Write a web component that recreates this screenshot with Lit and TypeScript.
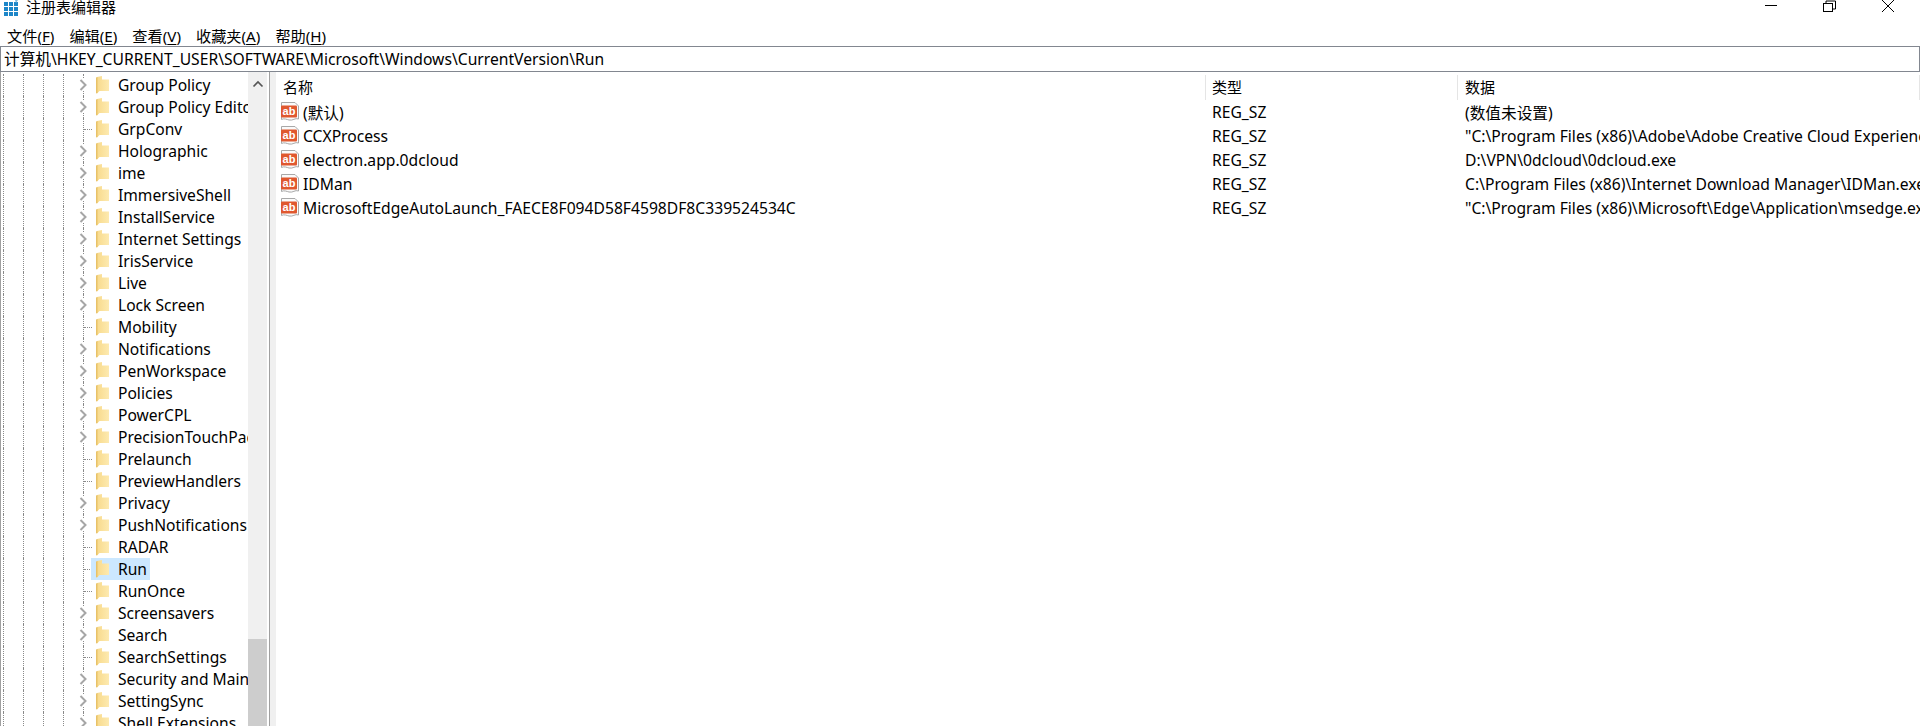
import { LitElement, html, css, svg } from "lit";
import { customElement } from "lit/decorators.js";

const TREE: [string, boolean][] = [
  ["Group Policy", true], ["Group Policy Editor", true], ["GrpConv", false], ["Holographic", true], ["ime", true],
  ["ImmersiveShell", true], ["InstallService", true], ["Internet Settings", true], ["IrisService", true], ["Live", true],
  ["Lock Screen", true], ["Mobility", false], ["Notifications", true], ["PenWorkspace", true], ["Policies", true],
  ["PowerCPL", true], ["PrecisionTouchPad", true], ["Prelaunch", false], ["PreviewHandlers", false], ["Privacy", true],
  ["PushNotifications", true], ["RADAR", false], ["Run", false], ["RunOnce", false], ["Screensavers", true],
  ["Search", true], ["SearchSettings", false], ["Security and Maintenance", true], ["SettingSync", true], ["Shell Extensions", true],
];
const VALUES = [
  ["(默认)", "(数值未设置)"],
  ["CCXProcess", "\"C:\\Program Files (x86)\\Adobe\\Adobe Creative Cloud Experience\\CCXProcess.exe\""],
  ["electron.app.0dcloud", "D:\\VPN\\0dcloud\\0dcloud.exe"],
  ["IDMan", "C:\\Program Files (x86)\\Internet Download Manager\\IDMan.exe /onboot"],
  ["MicrosoftEdgeAutoLaunch_FAECE8F094D58F4598DF8C339524534C", "\"C:\\Program Files (x86)\\Microsoft\\Edge\\Application\\msedge.exe\" --no-startup-window"],
];

const folder = svg`<svg class="folder" width="13" height="18" viewBox="0 0 13 18"><defs><linearGradient id="fg" x1="0" y1="0" x2="1" y2="0"><stop offset="0" stop-color="#f8da8c"/><stop offset="1" stop-color="#fdeab0"/></linearGradient></defs><path d="M1 17.500 L1 1 L6 0 L6 3.500 L13 3.500 L13 15 L3.500 15 L1 17.500Z" fill="url(#fg)"/><path d="M0 1.500 L1.500 1 L1.500 17 L0 17.500Z" fill="#e8c268"/></svg>`;
const chev = svg`<svg class="chev" width="9" height="12" viewBox="0 0 9 12"><path d="M1.500 1 L6.500 6 L1.500 11" fill="none" stroke="#a6a6a6" stroke-width="2"/></svg>`;
const ab = svg`<svg class="ab" width="20" height="20" viewBox="0 0 20 20"><path d="M1.500 .5 H15 L18.500 4 V17 C15 15.500 13 19 9 18 C7 17.500 4 16 1.500 17.500Z" fill="#fafafa" stroke="#a8a8a8"/><rect x="1" y="3.500" width="16" height="12" rx="1" fill="#e0582f"/><text x="9" y="13" font-family="Liberation Sans, sans-serif" font-weight="700" font-size="11" fill="#fff" text-anchor="middle">ab</text></svg>`;
const appIcon = svg`<svg width="18" height="16" viewBox="0 0 18 16"><g fill="#1d86c8"><rect x="2" y="2" width="4" height="4"/><rect x="7" y="2" width="4" height="4"/><rect x="12" y="2" width="4" height="4"/><rect x="2" y="7" width="4" height="4"/><rect x="7" y="7" width="4" height="4"/><rect x="12" y="7" width="4" height="4"/><rect x="2" y="12" width="4" height="4"/><rect x="7" y="12" width="4" height="4"/><rect x="12" y="12" width="4" height="4"/></g><path d="M13 0 L16 0 L14 3Z" fill="#7fb8dc"/></svg>`;

@customElement("app-root")
export class AppRoot extends LitElement {
  static styles = css`
    :host { display: block; width: 1920px; height: 726px; overflow: hidden; background: #fff; font-family: "Noto Sans", "Noto Sans CJK SC", sans-serif; font-size: 15.6px; color: #000; }
    .title { height: 23px; display: flex; align-items: flex-start; }
    .title .icon { margin: -1px 4px 0 2px; height: 16px; }
    .title .t { font-size: 15px; line-height: 14px; margin-left: 2px; }
    .wc { margin-left: auto; display: flex; }
    .wc svg { display: block; }
    .menu { height: 23px; display: flex; align-items: center; padding-left: 7px; gap: 15px; font-size: 15.2px; }
    .menu u { text-underline-offset: 2px; }
    .addr { height: 24px; border: 1px solid #828790; line-height: 24px; padding-left: 3px; white-space: nowrap; overflow: hidden; font-size: 15.66px; }
    .main { display: flex; height: 654px; }
    .treep { width: 266px; display: flex; flex: none; border-left: 1px solid #a0a0a0; overflow: hidden; }
    .tree { width: 247px; overflow: hidden; flex: none; padding-top: 2px; }
    .row { height: 22px; display: flex; align-items: stretch; padding-left: 2px; white-space: nowrap; }
    .g { width: 19px; border-left: 1px dotted #8a8a8a; flex: none; }
    .conn { width: 12px; flex: none; border-left: 1px dotted #8a8a8a; display: flex; align-items: center; }
    .conn .h { width: 8px; border-top: 1px dotted #8a8a8a; }
    .conn .chev { margin-left: -5px; background: #fff; }
    .item { display: flex; align-items: center; padding-left: 5px; padding-right: 3px; margin-left: -5px; line-height: 24px; }
    .item.sel { background: #cce8ff; }
    .folder { margin-right: 9px; flex: none; }
    .sb { width: 19px; flex: none; background: #f0f0f0; display: flex; flex-direction: column; }
    .sb .up { height: 24px; display: flex; align-items: center; justify-content: center; }
    .sb .sp { height: 543px; }
    .sb .thumb { flex: 1; background: #cdcdcd; }
    .split { width: 7px; margin-left: 2px; flex: none; background: #f0f0f0; border-left: 1px solid #a0a0a0; box-sizing: border-box; }
    .list { flex: 1; min-width: 0; overflow: hidden; }
    .hd, .vr { display: grid; grid-template-columns: 930px 252px 1fr; white-space: nowrap; }
    .hd { height: 28px; padding-top: 3px; box-sizing: border-box; align-items: start; font-size: 15px; }
    .hd div { padding-left: 7px; border-right: 1px solid #e5e5e5; height: 25px; line-height: 25px; overflow: hidden; }
    .hd div:nth-child(2) { padding-left: 6px; }
    .vr { height: 24px; align-items: center; font-size: 15.66px; }
    .vr > div { overflow: hidden; padding-left: 7px; }
    .vr > div:nth-child(2) { padding-left: 6px; }
    .vr .n { display: flex; align-items: center; padding-left: 4px; }
    .ab { margin-right: 3px; flex: none; }
  `;

  render() {
    return html`
      <div class="title">
        <span class="icon">${appIcon}</span><span class="t">注册表编辑器</span>
        <div class="wc">
          <svg width="240" height="14" viewBox="0 0 240 14"><path d="M85 5.500H97" stroke="#000"/><rect x="143.500" y="3.500" width="9" height="8" fill="none" stroke="#000"/><path d="M146 3.500V1H155.500V9H152.500" fill="none" stroke="#000"/><path d="M202 0L214 12M214 0L202 12" stroke="#000"/></svg>
        </div>
      </div>
      <div class="menu">
        <span>文件(<u>F</u>)</span><span>编辑(<u>E</u>)</span><span>查看(<u>V</u>)</span><span>收藏夹(<u>A</u>)</span><span>帮助(<u>H</u>)</span>
      </div>
      <div class="addr">计算机\\HKEY_CURRENT_USER\\SOFTWARE\\Microsoft\\Windows\\CurrentVersion\\Run</div>
      <div class="main">
        <div class="treep">
          <div class="tree">
            ${TREE.map(([n, exp]) => html`<div class="row">
              <span class="g"></span><span class="g"></span><span class="g"></span><span class="g"></span>
              <span class="conn">${exp ? chev : html`<span class="h"></span>`}</span>
              <span class="item ${n === "Run" ? "sel" : ""}">${folder}<span>${n}</span></span>
            </div>`)}
          </div>
          <div class="sb">
            <div class="up"><svg width="12" height="8" viewBox="0 0 12 8"><path d="M1.500 6.500L6 2L10.500 6.500" fill="none" stroke="#555" stroke-width="1.700"/></svg></div>
            <div class="sp"></div><div class="thumb"></div>
          </div>
        </div>
        <div class="split"></div>
        <div class="list">
          <div class="hd"><div>名称</div><div>类型</div><div>数据</div></div>
          ${VALUES.map(([n, d]) => html`<div class="vr"><div class="n">${ab}<span>${n}</span></div><div>REG_SZ</div><div>${d}</div></div>`)}
        </div>
      </div>
    `;
  }
}
